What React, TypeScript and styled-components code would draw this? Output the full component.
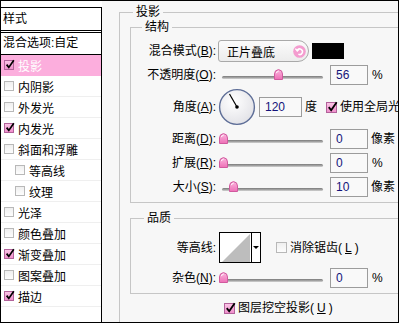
import styled, { createGlobalStyle } from 'styled-components';

const GlobalStyle = createGlobalStyle`
  * { box-sizing: border-box; }
  html, body { margin: 0; padding: 0; background: #fff; }
  body {
    font-family: "Liberation Sans", "Noto Sans CJK SC", sans-serif;
    font-size: 12px;
    color: #000;
  }
`;

const Frame = styled.div`
  width: 399px;
  height: 323px;
  border: 1px solid #000;
  display: flex;
  overflow: hidden;
  background: #f7f7f7;
`;

/* ---------- left: style list ---------- */

const Sidebar = styled.aside`
  width: 101px;
  flex: none;
  padding-top: 6px;
  background: #fff;
  display: flex;
`;

const SidebarInner = styled.div`
  flex: 1;
  border-right: 1px solid #000;
  display: flex;
  flex-direction: column;
`;

const SideHeader = styled.div`
  height: 24px;
  border-top: 1px solid #000;
  border-bottom: 1px solid #000;
  padding-left: 2px;
  line-height: 22px;
  white-space: nowrap;
`;

const BlendOptions = styled(SideHeader)`
  height: 23px;
  margin-top: 1px;
  line-height: 21px;
`;

const LayerRow = styled.div<{ $active?: boolean; $nested?: boolean }>`
  height: 21px;
  display: flex;
  align-items: center;
  gap: 4px;
  padding-left: ${({ $nested }) => ($nested ? 14 : 3)}px;
  border-bottom: 1px solid ${({ $active }) => ($active ? '#fcaedd' : '#efefef')};
  background: ${({ $active }) => ($active ? '#fcaedd' : 'transparent')};
  color: ${({ $active }) => ($active ? '#fff' : '#000')};
  white-space: nowrap;
`;

/* ---------- checkbox ---------- */

const Box = styled.span<{ $on?: boolean; $size: number }>`
  position: relative;
  flex: none;
  width: ${({ $size }) => $size}px;
  height: ${({ $size }) => $size}px;
  border: 1px solid ${({ $on }) => ($on ? '#b2629a' : '#b8b8b8')};
  background: ${({ $on }) =>
    $on ? 'linear-gradient(#fbc4e6, #f08fcc)' : 'linear-gradient(#efefef, #fdfdfd)'};

  svg {
    position: absolute;
    left: 0;
    top: -2px;
  }
`;

function Check({ on, size = 10 }: { on?: boolean; size?: number }) {
  return (
    <Box $on={on} $size={size}>
      {on && (
        <svg width={size} height={size} viewBox="0 0 10 10">
          <path d="M1.6 5.6 L3.8 8.4 L8.8 1.2" fill="none" stroke="#000" strokeWidth="1.7" />
        </svg>
      )}
    </Box>
  );
}

/* ---------- right: settings ---------- */

const Main = styled.main`
  flex: 1;
  min-width: 0;
  overflow: hidden;
  padding: 4px 0 0 17px;
`;

const Group = styled.fieldset<{ $width: number }>`
  margin: 0;
  min-width: 0;
  width: ${({ $width }) => $width}px;
  border: 1px solid #c6c6c6;
  padding: 0;
`;

const OuterGroup = styled(Group)`
  padding: 1px 0 40px 10px;
`;

const StructureGroup = styled(Group)`
  padding: 5px 0 3px 0;
`;

const QualityGroup = styled(Group)`
  margin-top: 8px;
  padding: 6px 0 1px 0;
`;

const Caption = styled.legend<{ $offset: number }>`
  font-size: 12px;
  line-height: 14px;
  padding: 0 3px;
  margin-left: ${({ $offset }) => $offset}px;
`;

const FieldRow = styled.div<{ $h: number }>`
  display: flex;
  align-items: center;
  height: ${({ $h }) => $h}px;
  white-space: nowrap;
`;

const FieldLabel = styled.span`
  width: 85px;
  flex: none;
  text-align: right;
  line-height: 14px;

  u {
    text-decoration-thickness: 1px;
    text-underline-offset: 1px;
  }
`;

const Select = styled.div`
  width: 91px;
  height: 22px;
  margin-left: 2px;
  border: 1px solid #a9a9a9;
  border-radius: 3px 11px 11px 3px;
  background: linear-gradient(#fbfbfb, #ececec);
  display: flex;
  align-items: center;
  justify-content: space-between;
  padding: 0 2px 0 8px;
`;

const Swatch = styled.div`
  width: 32px;
  height: 16px;
  margin-left: 3px;
  background: #000;
`;

const SliderWrap = styled.div`
  position: relative;
  flex: none;
  width: 101px;
  height: 12px;
  margin-left: 6px;
  padding-top: 7px;
`;

const Track = styled.div`
  height: 3px;
  border-radius: 2px;
  background: linear-gradient(#7a7a7a, #a8a8a8 60%, #d6d6d6);
`;

const Knob = styled.svg`
  position: absolute;
  top: 0;
`;

const NumBox = styled.div<{ $w: number; $gap: number }>`
  width: ${({ $w }) => $w}px;
  height: 20px;
  flex: none;
  margin-left: ${({ $gap }) => $gap}px;
  border: 1px solid #9c9c9c;
  background: #f9f9f9;
  padding-left: 5px;
  line-height: 18px;
  color: #14147a;
`;

const Unit = styled.span<{ $gap?: number }>`
  margin-left: ${({ $gap }) => $gap ?? 4}px;
  line-height: 14px;
`;

const Dial = styled.svg`
  margin-left: 2px;
  flex: none;
`;

const CheckText = styled.label<{ $gap: number }>`
  display: flex;
  align-items: center;
  gap: 3px;
  margin-left: ${({ $gap }) => $gap}px;
  line-height: 14px;
`;

const ContourPicker = styled.div`
  width: 42px;
  height: 31px;
  margin-left: 3px;
  border: 1px solid #000;
  background: #fff;
  display: flex;
`;

const ContourPreview = styled.div`
  flex: 1;
  padding: 1px 1px 0 2px;
  display: flex;
`;

const ContourArrow = styled.div`
  width: 9px;
  border-left: 1px solid #000;
  display: flex;
  align-items: center;
  justify-content: center;

  &::after {
    content: '';
    border-left: 3px solid transparent;
    border-right: 3px solid transparent;
    border-top: 3px solid #000;
  }
`;

const KnockoutRow = styled.div`
  height: 28px;
  display: flex;
  align-items: center;
  padding-left: 94px;
  white-space: nowrap;
`;

function Slider({ pos }: { pos: number }) {
  return (
    <SliderWrap>
      <Track />
      <Knob width="9" height="11" viewBox="0 0 9 11" style={{ left: pos - 4.5 }}>
        <defs>
          <linearGradient id="knobFill" x1="0" y1="0" x2="0" y2="1">
            <stop offset="0" stopColor="#fbb6de" />
            <stop offset="1" stopColor="#ee6fb6" />
          </linearGradient>
        </defs>
        <path d="M0.5 10.5 V5 Q0.5 1 4.5 0.6 Q8.5 1 8.5 5 V10.5 Z" fill="url(#knobFill)" stroke="#d05a9e" />
        <path d="M2.2 4.2 Q3 2.4 4.6 2.2" stroke="#fff" strokeWidth="1" fill="none" />
      </Knob>
    </SliderWrap>
  );
}

function ResetIcon() {
  return (
    <svg width="13" height="13" viewBox="0 0 13 13">
      <circle cx="6.5" cy="6.5" r="6.3" fill="#f49ccf" />
      <path d="M4.3 5.2 A2.8 2.8 0 1 1 5.4 9.2" stroke="#fff" strokeWidth="1.5" fill="none" />
      <path d="M2.4 3.6 L4.3 5.9 L6.3 4.1" stroke="#fff" strokeWidth="1.4" fill="none" />
    </svg>
  );
}

const layers: { name: string; on?: boolean; active?: boolean; nested?: boolean }[] = [
  { name: '投影', on: true, active: true },
  { name: '内阴影' },
  { name: '外发光' },
  { name: '内发光', on: true },
  { name: '斜面和浮雕' },
  { name: '等高线', nested: true },
  { name: '纹理', nested: true },
  { name: '光泽' },
  { name: '颜色叠加' },
  { name: '渐变叠加', on: true },
  { name: '图案叠加' },
  { name: '描边', on: true },
];

function App() {
  const angle = (120 * Math.PI) / 180;
  const hx = 19 + 15 * Math.cos(angle);
  const hy = 19 - 15 * Math.sin(angle);

  return (
    <>
      <GlobalStyle />
      <Frame>
        <Sidebar>
          <SidebarInner>
            <SideHeader>样式</SideHeader>
            <BlendOptions>混合选项:自定</BlendOptions>
            {layers.map((l) => (
              <LayerRow key={l.name} $active={l.active} $nested={l.nested}>
                <Check on={l.on} />
                {l.name}
              </LayerRow>
            ))}
          </SidebarInner>
        </Sidebar>

        <Main>
          <OuterGroup $width={300}>
            <Caption $offset={3}>投影</Caption>

            <StructureGroup $width={290}>
              <Caption $offset={11}>结构</Caption>
              <FieldRow $h={24}>
                <FieldLabel>混合模式(<u>B</u>):</FieldLabel>
                <Select>
                  正片叠底
                  <ResetIcon />
                </Select>
                <Swatch />
              </FieldRow>
              <FieldRow $h={24}>
                <FieldLabel>不透明度(<u>O</u>):</FieldLabel>
                <Slider pos={56} />
                <NumBox $w={38} $gap={7}>56</NumBox>
                <Unit>%</Unit>
              </FieldRow>
              <FieldRow $h={40}>
                <FieldLabel>角度(<u>A</u>):</FieldLabel>
                <Dial width="38" height="38" viewBox="0 0 38 38">
                  <defs>
                    <radialGradient id="dialFill" cx="40%" cy="35%" r="70%">
                      <stop offset="0" stopColor="#ffffff" />
                      <stop offset="1" stopColor="#e1e1e6" />
                    </radialGradient>
                  </defs>
                  <circle cx="19" cy="19" r="17.4" fill="url(#dialFill)" stroke="#5f6f98" strokeWidth="1.4" />
                  <line x1="19" y1="19" x2={hx} y2={hy} stroke="#000" strokeWidth="1.2" />
                  <circle cx="19" cy="19" r="1.8" fill="#000" />
                </Dial>
                <NumBox $w={43} $gap={3}>120</NumBox>
                <Unit $gap={3}>度</Unit>
                <CheckText $gap={9}>
                  <Check on size={11} />
                  使用全局光
                </CheckText>
              </FieldRow>
              <FieldRow $h={24}>
                <FieldLabel>距离(<u>D</u>):</FieldLabel>
                <Slider pos={1} />
                <NumBox $w={38} $gap={7}>0</NumBox>
                <Unit $gap={3}>像素</Unit>
              </FieldRow>
              <FieldRow $h={24}>
                <FieldLabel>扩展(<u>R</u>):</FieldLabel>
                <Slider pos={1} />
                <NumBox $w={38} $gap={7}>0</NumBox>
                <Unit>%</Unit>
              </FieldRow>
              <FieldRow $h={24}>
                <FieldLabel>大小(<u>S</u>):</FieldLabel>
                <Slider pos={11} />
                <NumBox $w={38} $gap={7}>10</NumBox>
                <Unit $gap={3}>像素</Unit>
              </FieldRow>
            </StructureGroup>

            <QualityGroup $width={290}>
              <Caption $offset={13}>品质</Caption>
              <FieldRow $h={33}>
                <FieldLabel>等高线:</FieldLabel>
                <ContourPicker>
                  <ContourPreview>
                    <svg width="100%" height="100%" viewBox="0 0 30 28" preserveAspectRatio="none">
                      <path d="M0 28 L30 0 L30 28 Z" fill="#bdbdbd" />
                    </svg>
                  </ContourPreview>
                  <ContourArrow />
                </ContourPicker>
                <CheckText $gap={15}>
                  <Check size={11} />
                  消除锯齿(<u>L</u>)
                </CheckText>
              </FieldRow>
              <FieldRow $h={28}>
                <FieldLabel>杂色(<u>N</u>):</FieldLabel>
                <Slider pos={1} />
                <NumBox $w={38} $gap={7}>0</NumBox>
                <Unit>%</Unit>
              </FieldRow>
            </QualityGroup>

            <KnockoutRow>
              <CheckText $gap={0}>
                <Check on size={11} />
                图层挖空投影(<u>U</u>)
              </CheckText>
            </KnockoutRow>
          </OuterGroup>
        </Main>
      </Frame>
    </>
  );
}

export default App;
